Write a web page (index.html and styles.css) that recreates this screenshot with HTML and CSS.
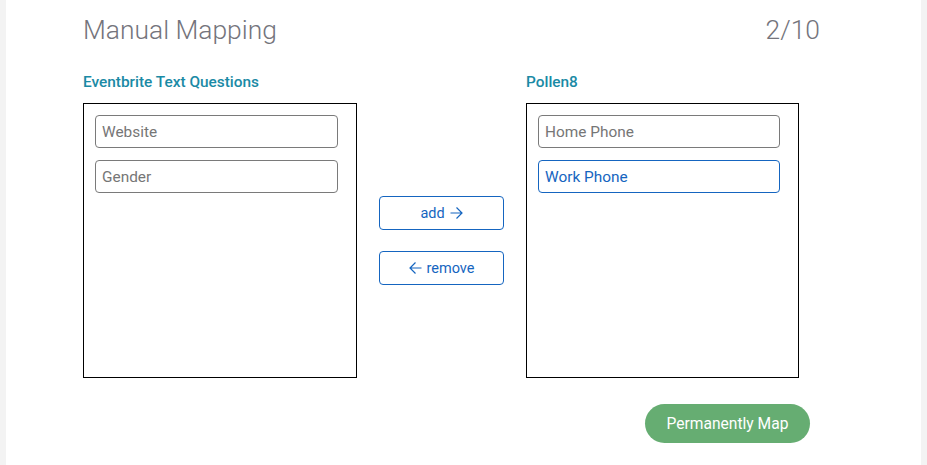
FILE: index.html
```html
<!DOCTYPE html>
<html>
<head>
<meta charset="utf-8">
<link rel="stylesheet" href="styles.css">
</head>
<body>
<div class="page">
  <div class="header">
    <h1 class="title">Manual Mapping</h1>
    <div class="count">2/10</div>
  </div>
  <div class="columns">
    <div class="col col-left">
      <div class="label">Eventbrite Text Questions</div>
      <div class="box">
        <div class="item">Website</div>
        <div class="item">Gender</div>
      </div>
    </div>
    <div class="middle">
      <button class="btn">add <svg class="arrow" width="13" height="12" viewBox="0 0 13 12"><path d="M0.5 6H12M6.5 0.5L12 6L6.5 11.5" fill="none" stroke="currentColor" stroke-width="1.2"/></svg></button>
      <button class="btn"><svg class="arrow" width="13" height="12" viewBox="0 0 13 12"><path d="M12.5 6H1M6.5 0.5L1 6L6.5 11.5" fill="none" stroke="currentColor" stroke-width="1.2"/></svg> remove</button>
    </div>
    <div class="col col-right">
      <div class="label">Pollen8</div>
      <div class="box">
        <div class="item">Home Phone</div>
        <div class="item selected">Work Phone</div>
      </div>
    </div>
  </div>
  <div class="footer">
    <button class="map-btn">Permanently Map</button>
  </div>
</div>
</body>
</html>
```

FILE: styles.css
```css
html, body {
  margin: 0;
  padding: 0;
}
body {
  background: #f3f3f3;
  font-family: Roboto, "Liberation Sans", sans-serif;
  height: 465px;
  overflow: hidden;
}
.page {
  margin: 0 6px;
  background: #ffffff;
  height: 465px;
  padding-left: 77px;
  box-sizing: border-box;
}
.header {
  width: 737px;
  display: flex;
  justify-content: space-between;
  align-items: baseline;
  padding-top: 12px;
  height: 58px;
  box-sizing: border-box;
}
.title {
  margin: 0;
  font-weight: 300;
  font-size: 26.4px;
  line-height: 36px;
  color: #74747c;
}
.count {
  font-weight: 300;
  font-size: 26.4px;
  line-height: 36px;
  color: #74747c;
}
.columns {
  display: flex;
  gap: 22px;
  padding-top: 14px;
}
.col-left { width: 274px; }
.col-right { width: 273px; }
.label {
  font-weight: 500;
  font-size: 15.4px;
  line-height: 20px;
  color: #1a8aa5;
  height: 31px;
}
.box {
  border: 1px solid #000;
  height: 275px;
  box-sizing: border-box;
  padding: 11px 18px 0 11px;
  display: flex;
  flex-direction: column;
  gap: 12px;
}
.item {
  height: 33px;
  box-sizing: border-box;
  border: 1px solid #7a7a7a;
  border-radius: 4px;
  padding: 1px 6px 0;
  font-size: 15.4px;
  line-height: 31px;
  color: #767676;
}
.item.selected {
  border-color: #1565c0;
  color: #1565c0;
}
.middle {
  width: 125px;
  display: flex;
  flex-direction: column;
  gap: 21px;
  padding-top: 124px;
}
.btn {
  height: 34px;
  width: 125px;
  background: #fff;
  border: 1px solid #1565c0;
  border-radius: 4px;
  color: #1565c0;
  font-family: Roboto, "Liberation Sans", sans-serif;
  font-size: 14.5px;
  padding: 0;
  cursor: pointer;
  display: flex;
  align-items: center;
  justify-content: center;
  gap: 5px;
}
.arrow {
  display: block;
}
.footer {
  width: 727px;
  display: flex;
  justify-content: flex-end;
  padding-top: 26px;
}
.map-btn {
  width: 165px;
  height: 39px;
  border: none;
  border-radius: 20px;
  background: #66ad72;
  color: #fff;
  font-family: Roboto, "Liberation Sans", sans-serif;
  font-weight: 400;
  font-size: 15.6px;
  cursor: pointer;
}
```
